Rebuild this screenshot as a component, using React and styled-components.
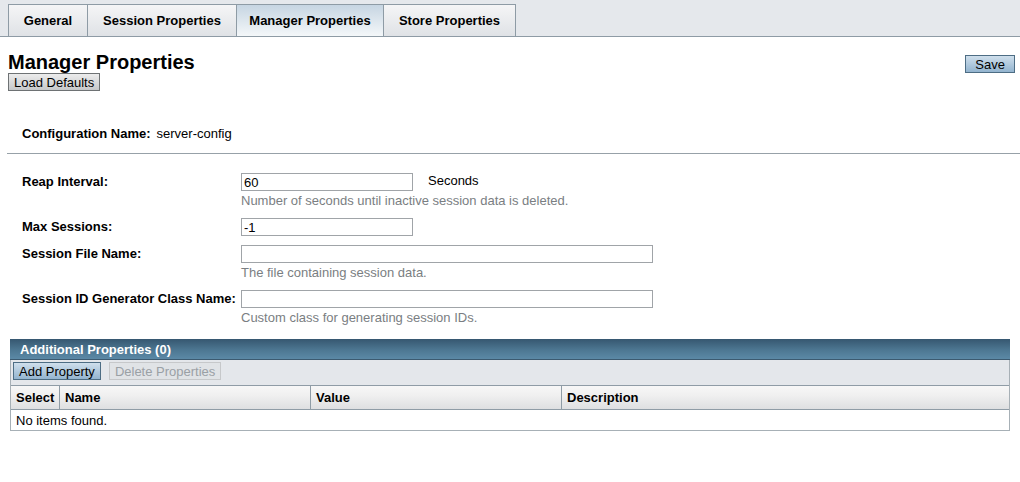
import React from 'react';
import styled, { createGlobalStyle } from 'styled-components';

const fontFamily = '"Liberation Sans", Arial, sans-serif';
const tabBorder = '#8e9ba5';
const tableBorder = '#a7b0b6';

const GlobalStyle = createGlobalStyle`
  body {
    margin: 0;
    background: #ffffff;
    font-family: ${fontFamily};
    font-size: 13px;
    color: #000;
  }
`;

const TabBar = styled.div`
  display: flex;
  background-color: #e5e8ec;
  border-bottom: 1px solid ${tabBorder};
  padding: 4px 0 0 8px;
  height: 32px;
`;

const Tab = styled.div`
  box-sizing: border-box;
  display: flex;
  align-items: center;
  justify-content: center;
  width: ${(p) => p.width}px;
  border: 1px solid ${tabBorder};
  border-bottom: none;
  margin-left: -1px;
  font-weight: bold;
  font-size: 13px;
  background: ${(p) =>
    p.active
      ? 'linear-gradient(#c6d5e2, #f4f7f9)'
      : 'linear-gradient(#f5f5f6, #dfe2e6)'};
  &:first-child {
    margin-left: 0;
  }
`;

const Header = styled.div`
  display: flex;
  justify-content: space-between;
  align-items: flex-start;
  padding: 14px 5px 0 8px;
`;

const Title = styled.h1`
  margin: 0;
  font-size: 20px;
  font-weight: bold;
  line-height: 22px;
`;

const Button = styled.button`
  font-family: ${fontFamily};
  font-size: 13px;
  height: 18px;
  padding: 0 5px;
  line-height: 15px;
  border: 1px solid ${(p) => (p.primary ? '#4d6d84' : p.disabled ? '#c6c8ca' : '#6e7274')};
  color: ${(p) => (p.disabled ? '#9aa0a5' : '#000')};
  background: ${(p) =>
    p.primary
      ? 'linear-gradient(#cfdfec, #93b4cf)'
      : p.disabled
      ? '#e0e3e6'
      : 'linear-gradient(#ececec, #c6c8ca)'};
  cursor: pointer;
`;

const SaveButton = styled(Button)`
  margin-top: 4px;
  padding: 0 9px;
`;

const ConfigRow = styled.div`
  display: flex;
  align-items: baseline;
  gap: 6px;
  padding: 35px 0 0 22px;
  height: 20px;
`;

const Label = styled.span`
  font-weight: bold;
  font-size: 13px;
`;

const Divider = styled.hr`
  margin: 7px 0 0 7px;
  border: none;
  border-top: 1px solid #97a1a8;
`;

const Form = styled.div`
  display: grid;
  grid-template-columns: 219px 1fr;
  row-gap: 9px;
  padding: 19px 0 0 22px;
`;

const FieldLabel = styled.div`
  font-weight: bold;
  font-size: 13px;
  padding-top: 1px;
`;

const FieldBody = styled.div`
  display: flex;
  flex-direction: column;
  gap: 2px;
`;

const InputLine = styled.div`
  display: flex;
  align-items: center;
  gap: 15px;
`;

const Input = styled.input`
  box-sizing: border-box;
  width: ${(p) => (p.wide ? 412 : 172)}px;
  height: 18px;
  border: 1px solid #a0a4a8;
  padding: 1px 2px;
  font-family: ${fontFamily};
  font-size: 13px;
  margin: 0;
`;

const Unit = styled.span`
  font-size: 13px;
  margin-top: -4px;
`;

const Help = styled.div`
  color: #7a7e82;
  font-size: 13px;
  line-height: 16px;
`;

const Table = styled.div`
  margin: 13px 10px 0 10px;
  border: 1px solid ${tableBorder};
  border-top: none;
`;

const TableTitle = styled.div`
  height: 20px;
  display: flex;
  align-items: center;
  padding-left: 10px;
  color: #fff;
  font-weight: bold;
  font-size: 13px;
  background: linear-gradient(#365770, #4d7792 55%, #5b89a6);
  border-bottom: 1px solid #3c5a70;
  margin: 0 -1px;
`;

const ActionBar = styled.div`
  display: flex;
  gap: 8px;
  padding: 2px 3px 5px 2px;
  background: #e4e7eb;
  border-bottom: 1px solid #8f9ca6;
`;

const HeadRow = styled.div`
  display: grid;
  grid-template-columns: 48px 251px 251px 1fr;
  height: 23px;
  background: linear-gradient(#f7f7f7, #f0f0f0 40%, #dedfe1);
  border-bottom: 1px solid #8f9ca6;
`;

const HeadCell = styled.div`
  display: flex;
  align-items: center;
  padding-left: 5px;
  font-weight: bold;
  font-size: 13px;
  border-left: 1px solid #8f9ca6;
  &:first-child {
    border-left: none;
  }
`;

const EmptyRow = styled.div`
  height: 20px;
  display: flex;
  align-items: center;
  padding-left: 5px;
  font-size: 13px;
`;

const tabs = [
  { label: 'General', width: 80 },
  { label: 'Session Properties', width: 150 },
  { label: 'Manager Properties', width: 148, active: true },
  { label: 'Store Properties', width: 133 }
];

const fields = [
  { label: 'Reap Interval:', value: '60', unit: 'Seconds', help: 'Number of seconds until inactive session data is deleted.' },
  { label: 'Max Sessions:', value: '-1' },
  { label: 'Session File Name:', value: '', wide: true, help: 'The file containing session data.' },
  { label: 'Session ID Generator Class Name:', value: '', wide: true, help: 'Custom class for generating session IDs.' }
];

const App = () => {
  return (
    <>
      <GlobalStyle />
      <TabBar>
        {tabs.map((t) => (
          <Tab key={t.label} width={t.width} active={t.active}>
            {t.label}
          </Tab>
        ))}
      </TabBar>
      <Header>
        <div>
          <Title>Manager Properties</Title>
          <Button>Load Defaults</Button>
        </div>
        <SaveButton primary>Save</SaveButton>
      </Header>
      <ConfigRow>
        <Label>Configuration Name:</Label>
        <span>server-config</span>
      </ConfigRow>
      <Divider />
      <Form>
        {fields.map((f) => (
          <React.Fragment key={f.label}>
            <FieldLabel>{f.label}</FieldLabel>
            <FieldBody>
              <InputLine>
                <Input wide={f.wide} defaultValue={f.value} />
                {f.unit && <Unit>{f.unit}</Unit>}
              </InputLine>
              {f.help && <Help>{f.help}</Help>}
            </FieldBody>
          </React.Fragment>
        ))}
      </Form>
      <Table>
        <TableTitle>Additional Properties (0)</TableTitle>
        <ActionBar>
          <Button primary>Add Property</Button>
          <Button disabled>Delete Properties</Button>
        </ActionBar>
        <HeadRow>
          <HeadCell>Select</HeadCell>
          <HeadCell>Name</HeadCell>
          <HeadCell>Value</HeadCell>
          <HeadCell>Description</HeadCell>
        </HeadRow>
        <EmptyRow>No items found.</EmptyRow>
      </Table>
    </>
  );
};

export default App;
